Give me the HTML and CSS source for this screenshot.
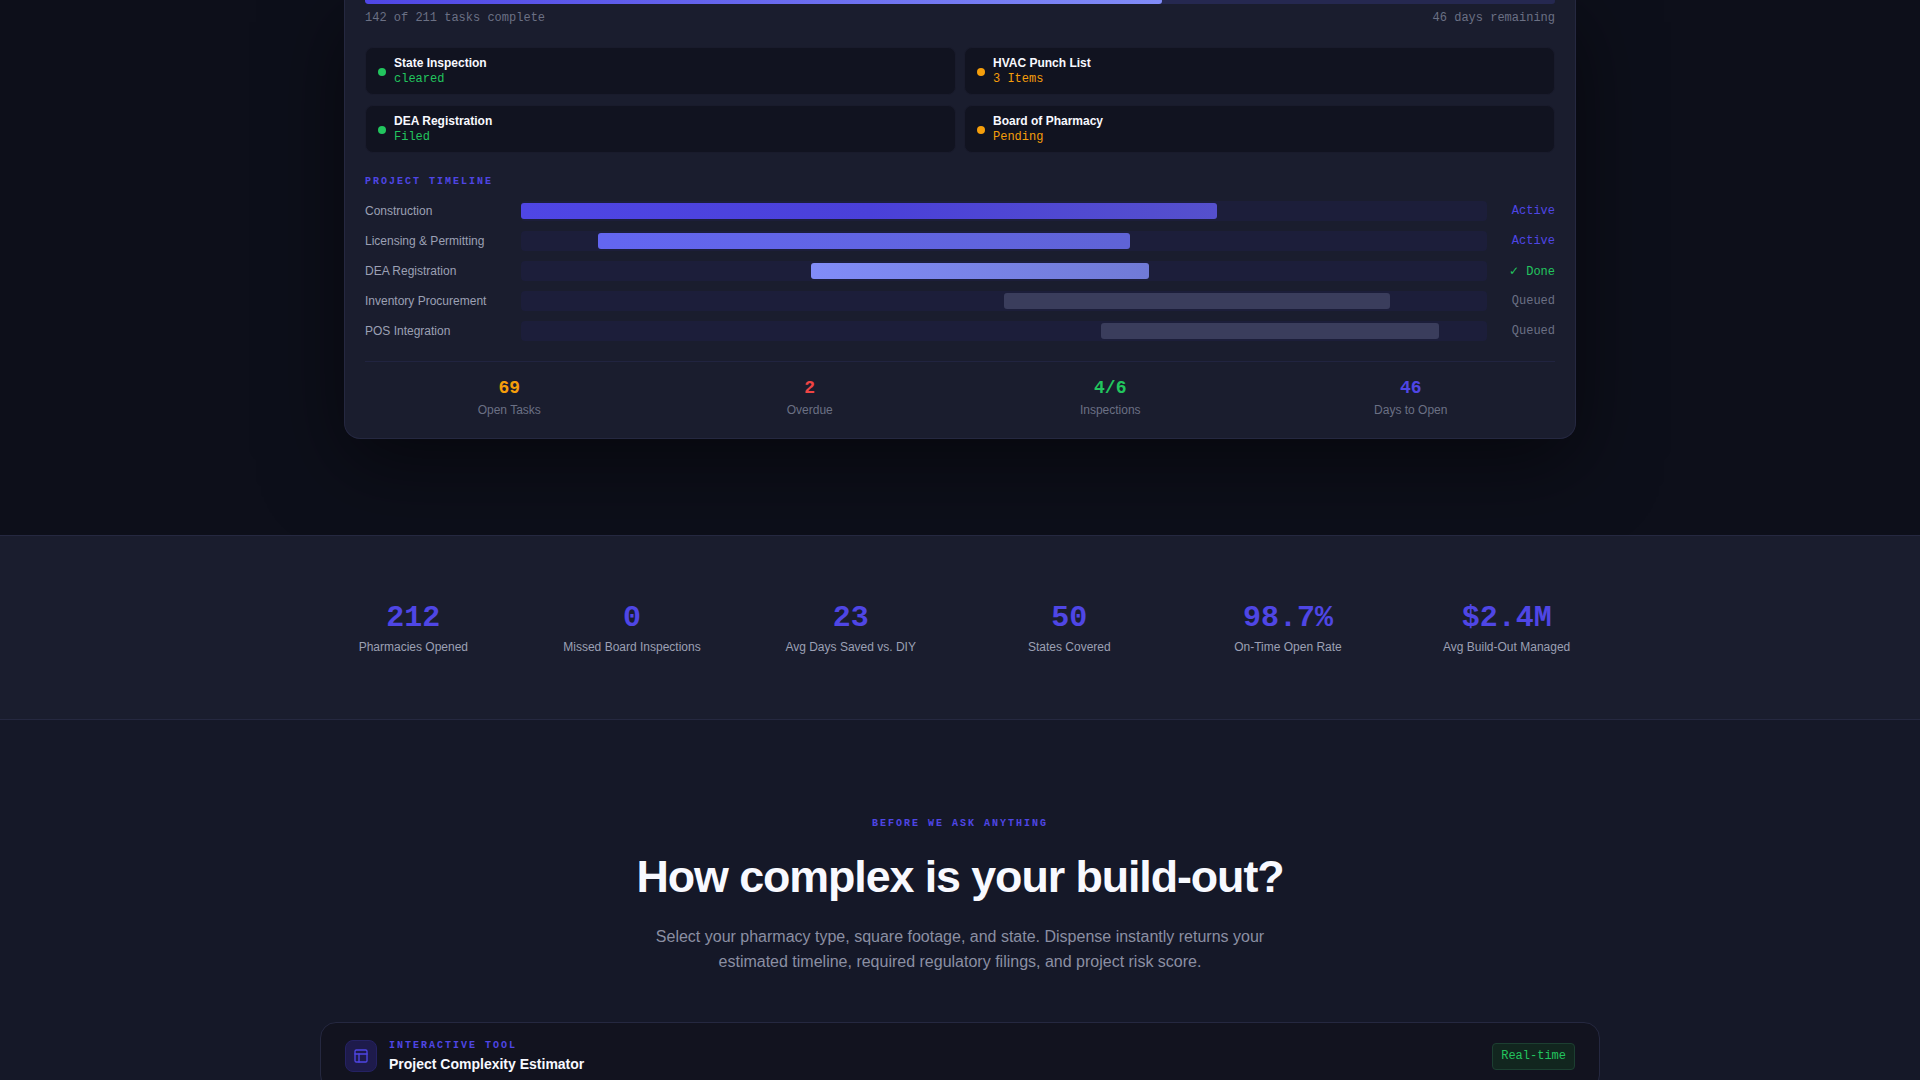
FILE: index.html
```html
<!DOCTYPE html>
<html lang="en">

<head>
    <meta charset="UTF-8">
    <meta name="viewport" content="width=device-width, initial-scale=1.0">
    <title>Dispense</title>
    <link rel="stylesheet" href="styles.css">
</head>

<body>
    <section class="hero">
        <div class="dash-card">
            <div class="progress"><div class="progress-fill"></div></div>
            <div class="progress-meta">
                <span>142 of 211 tasks complete</span>
                <span>46 days remaining</span>
            </div>

            <div class="status-grid">
                <div class="status-item">
                    <span class="dot dot-green"></span>
                    <div>
                        <div class="status-name">State Inspection</div>
                        <div class="status-note green">cleared</div>
                    </div>
                </div>
                <div class="status-item">
                    <span class="dot dot-amber"></span>
                    <div>
                        <div class="status-name">HVAC Punch List</div>
                        <div class="status-note amber">3 Items</div>
                    </div>
                </div>
                <div class="status-item">
                    <span class="dot dot-green"></span>
                    <div>
                        <div class="status-name">DEA Registration</div>
                        <div class="status-note green">Filed</div>
                    </div>
                </div>
                <div class="status-item">
                    <span class="dot dot-amber"></span>
                    <div>
                        <div class="status-name">Board of Pharmacy</div>
                        <div class="status-note amber">Pending</div>
                    </div>
                </div>
            </div>

            <div class="eyebrow timeline-title">PROJECT TIMELINE</div>
            <div class="timeline">
                <div class="tl-row">
                    <span class="tl-label">Construction</span>
                    <div class="tl-track"><div class="tl-bar bar-1" style="margin-left: 0%; width: 72%"></div></div>
                    <span class="tl-state indigo">Active</span>
                </div>
                <div class="tl-row">
                    <span class="tl-label">Licensing &amp; Permitting</span>
                    <div class="tl-track"><div class="tl-bar bar-2" style="margin-left: 8%; width: 55%"></div></div>
                    <span class="tl-state indigo">Active</span>
                </div>
                <div class="tl-row">
                    <span class="tl-label">DEA Registration</span>
                    <div class="tl-track"><div class="tl-bar bar-3" style="margin-left: 30%; width: 35%"></div></div>
                    <span class="tl-state green">✓ Done</span>
                </div>
                <div class="tl-row">
                    <span class="tl-label">Inventory Procurement</span>
                    <div class="tl-track"><div class="tl-bar bar-queued" style="margin-left: 50%; width: 40%"></div></div>
                    <span class="tl-state muted">Queued</span>
                </div>
                <div class="tl-row">
                    <span class="tl-label">POS Integration</span>
                    <div class="tl-track"><div class="tl-bar bar-queued" style="margin-left: 60%; width: 35%"></div></div>
                    <span class="tl-state muted">Queued</span>
                </div>
            </div>

            <div class="mini-stats">
                <div class="mini-stat">
                    <div class="mini-value amber">69</div>
                    <div class="mini-label">Open Tasks</div>
                </div>
                <div class="mini-stat">
                    <div class="mini-value red">2</div>
                    <div class="mini-label">Overdue</div>
                </div>
                <div class="mini-stat">
                    <div class="mini-value green">4/6</div>
                    <div class="mini-label">Inspections</div>
                </div>
                <div class="mini-stat">
                    <div class="mini-value indigo">46</div>
                    <div class="mini-label">Days to Open</div>
                </div>
            </div>
        </div>
    </section>

    <section class="stats-band">
        <div class="stats-row">
            <div class="stat">
                <div class="stat-value">212</div>
                <div class="stat-label">Pharmacies Opened</div>
            </div>
            <div class="stat">
                <div class="stat-value">0</div>
                <div class="stat-label">Missed Board Inspections</div>
            </div>
            <div class="stat">
                <div class="stat-value">23</div>
                <div class="stat-label">Avg Days Saved vs. DIY</div>
            </div>
            <div class="stat">
                <div class="stat-value">50</div>
                <div class="stat-label">States Covered</div>
            </div>
            <div class="stat">
                <div class="stat-value">98.7%</div>
                <div class="stat-label">On-Time Open Rate</div>
            </div>
            <div class="stat">
                <div class="stat-value">$2.4M</div>
                <div class="stat-label">Avg Build-Out Managed</div>
            </div>
        </div>
    </section>

    <section class="estimator">
        <div class="eyebrow">BEFORE WE ASK ANYTHING</div>
        <h2>How complex is your build-out?</h2>
        <p class="lead">Select your pharmacy type, square footage, and state. Dispense instantly returns your estimated timeline, required regulatory filings, and project risk score.</p>

        <div class="tool-card">
            <div class="tool-head">
                <div class="tool-icon">
                    <svg width="16" height="16" viewBox="0 0 24 24" fill="none" stroke="currentColor" stroke-width="2" stroke-linecap="round" stroke-linejoin="round">
                        <rect x="3" y="3" width="18" height="18" rx="2"></rect>
                        <line x1="3" y1="9" x2="21" y2="9"></line>
                        <line x1="9" y1="21" x2="9" y2="9"></line>
                    </svg>
                </div>
                <div class="tool-titles">
                    <div class="eyebrow">INTERACTIVE TOOL</div>
                    <div class="tool-name">Project Complexity Estimator</div>
                </div>
                <span class="badge">Real-time</span>
            </div>
        </div>
    </section>
</body>

</html>
```

FILE: styles.css
```css
html,
body {
    height: 1080px;
    overflow: hidden;
}

body {
    margin: 0;
    background-color: #151828;
    font-family: 'Liberation Sans', Arial, sans-serif;
    color: #f8f9ff;
}

.green { color: #22c55e; }
.amber { color: #f59e0b; }
.red { color: #ef4444; }
.indigo { color: #4f46e5; }
.muted { color: #6b7084; }

.eyebrow {
    font-family: 'Liberation Mono', monospace;
    font-size: 10px;
    font-weight: 700;
    line-height: 12px;
    letter-spacing: 2px;
    color: #4f46e5;
}

/* hero (the page is scrolled, so the top of the card is cut off) */
.hero {
    height: 535px;
    padding: 0 344px;
    background-color: #0d0f1a;
    overflow: hidden;
}

.dash-card {
    box-sizing: border-box;
    height: 441px;
    padding: 0 20px;
    background-color: #1a1d2e;
    border: 1px solid #252840;
    border-top: none;
    border-radius: 0 0 16px 16px;
    box-shadow: 0 24px 80px rgba(0, 0, 0, 0.5);
}

.progress {
    height: 6px;
    margin-top: -2px;
    background-color: #252850;
    border-radius: 3px;
    overflow: hidden;
}

.progress-fill {
    width: 67%;
    height: 100%;
    background: linear-gradient(90deg, #4f46e5, #818cf8);
    border-radius: 3px;
}

.progress-meta {
    display: flex;
    justify-content: space-between;
    margin-top: 7px;
    font-family: 'Liberation Mono', monospace;
    font-size: 12px;
    line-height: 14px;
    color: #6b7084;
}

.status-grid {
    display: grid;
    grid-template-columns: 1fr 1fr;
    gap: 10px 8px;
    margin-top: 22px;
}

.status-item {
    display: flex;
    align-items: center;
    gap: 8px;
    padding: 8px 12px 7px;
    background-color: #111320;
    border: 1px solid #191b2c;
    border-radius: 8px;
}

.dot {
    width: 8px;
    height: 8px;
    border-radius: 50%;
}

.dot-green { background-color: #22c55e; }
.dot-amber { background-color: #f59e0b; }

.status-name {
    font-size: 12px;
    font-weight: 700;
    line-height: 15px;
}

.status-note {
    margin-top: 1px;
    font-family: 'Liberation Mono', monospace;
    font-size: 12px;
    line-height: 15px;
}

.timeline-title {
    margin-top: 23px;
}

.timeline {
    display: flex;
    flex-direction: column;
    gap: 10px;
    margin-top: 13px;
}

.tl-row {
    display: grid;
    grid-template-columns: 140px 1fr 52px;
    column-gap: 16px;
    align-items: center;
}

.tl-label {
    font-size: 12px;
    color: #9ca0b4;
}

.tl-track {
    box-sizing: border-box;
    height: 20px;
    padding: 2px 0;
    background-color: #1c1e3a;
    border-radius: 4px;
}

.tl-bar {
    height: 16px;
    border-radius: 3px;
}

.bar-1 { background: linear-gradient(90deg, #4f46e5, #4a40d9 50%, #5550cc); }
.bar-2 { background: linear-gradient(90deg, #6366f1, #5f63d6); }
.bar-3 { background: linear-gradient(90deg, #818cf8, #707ad6); }
.bar-queued { background-color: #3a3d5c; }

.tl-state {
    font-family: 'Liberation Mono', 'DejaVu Sans', monospace;
    font-size: 12px;
    text-align: right;
    white-space: nowrap;
}

.mini-stats {
    display: grid;
    grid-template-columns: repeat(4, 1fr);
    gap: 12px;
    margin-top: 20px;
    padding-top: 15px;
    border-top: 1px solid #212440;
    text-align: center;
}

.mini-value {
    font-family: 'Liberation Mono', monospace;
    font-size: 18px;
    font-weight: 700;
    line-height: 22px;
}

.mini-label {
    margin-top: 4px;
    font-size: 12px;
    line-height: 14px;
    color: #6b7084;
}

/* stats band */
.stats-band {
    box-sizing: border-box;
    height: 185px;
    padding: 64px 344px 0;
    background-color: #1a1d2e;
    border-top: 1px solid #252840;
    border-bottom: 1px solid #252840;
}

.stats-row {
    display: grid;
    grid-template-columns: repeat(6, 1fr);
    column-gap: 80px;
    text-align: center;
}

.stat-value {
    font-family: 'Liberation Mono', monospace;
    font-size: 30px;
    font-weight: 700;
    line-height: 36px;
    color: #4f46e5;
    white-space: nowrap;
}

.stat-label {
    margin-top: 4px;
    font-size: 12px;
    line-height: 14px;
    color: #9ca0b4;
    white-space: nowrap;
}

/* estimator */
.estimator {
    padding-top: 98px;
    text-align: center;
}

.estimator h2 {
    margin: 21px 0 0;
    font-size: 44.8px;
    font-weight: 700;
    line-height: 50px;
    letter-spacing: -1.08px;
}

.lead {
    width: 640px;
    margin: 24px auto 0;
    font-size: 16px;
    line-height: 24.8px;
    color: #8b8fa3;
}

.tool-card {
    box-sizing: border-box;
    width: 1280px;
    margin: 47px auto 0;
    background-color: #12131f;
    border: 1px solid #252840;
    border-radius: 16px;
    text-align: left;
}

.tool-head {
    display: flex;
    align-items: center;
    gap: 12px;
    padding: 17px 24px;
}

.tool-icon {
    display: flex;
    align-items: center;
    justify-content: center;
    width: 32px;
    height: 32px;
    background-color: #1e1b4b;
    border: 1px solid #252263;
    box-sizing: border-box;
    border-radius: 8px;
    color: #4f46e5;
}

.tool-titles {
    flex: 1;
}

.tool-name {
    margin-top: 3px;
    font-size: 14px;
    font-weight: 700;
    line-height: 18px;
}

.badge {
    padding: 5px 8px;
    font-family: 'Liberation Mono', monospace;
    font-size: 12px;
    line-height: 15px;
    color: #22c55e;
    background-color: #12261f;
    border: 1px solid #1c3f31;
    border-radius: 4px;
}
```
